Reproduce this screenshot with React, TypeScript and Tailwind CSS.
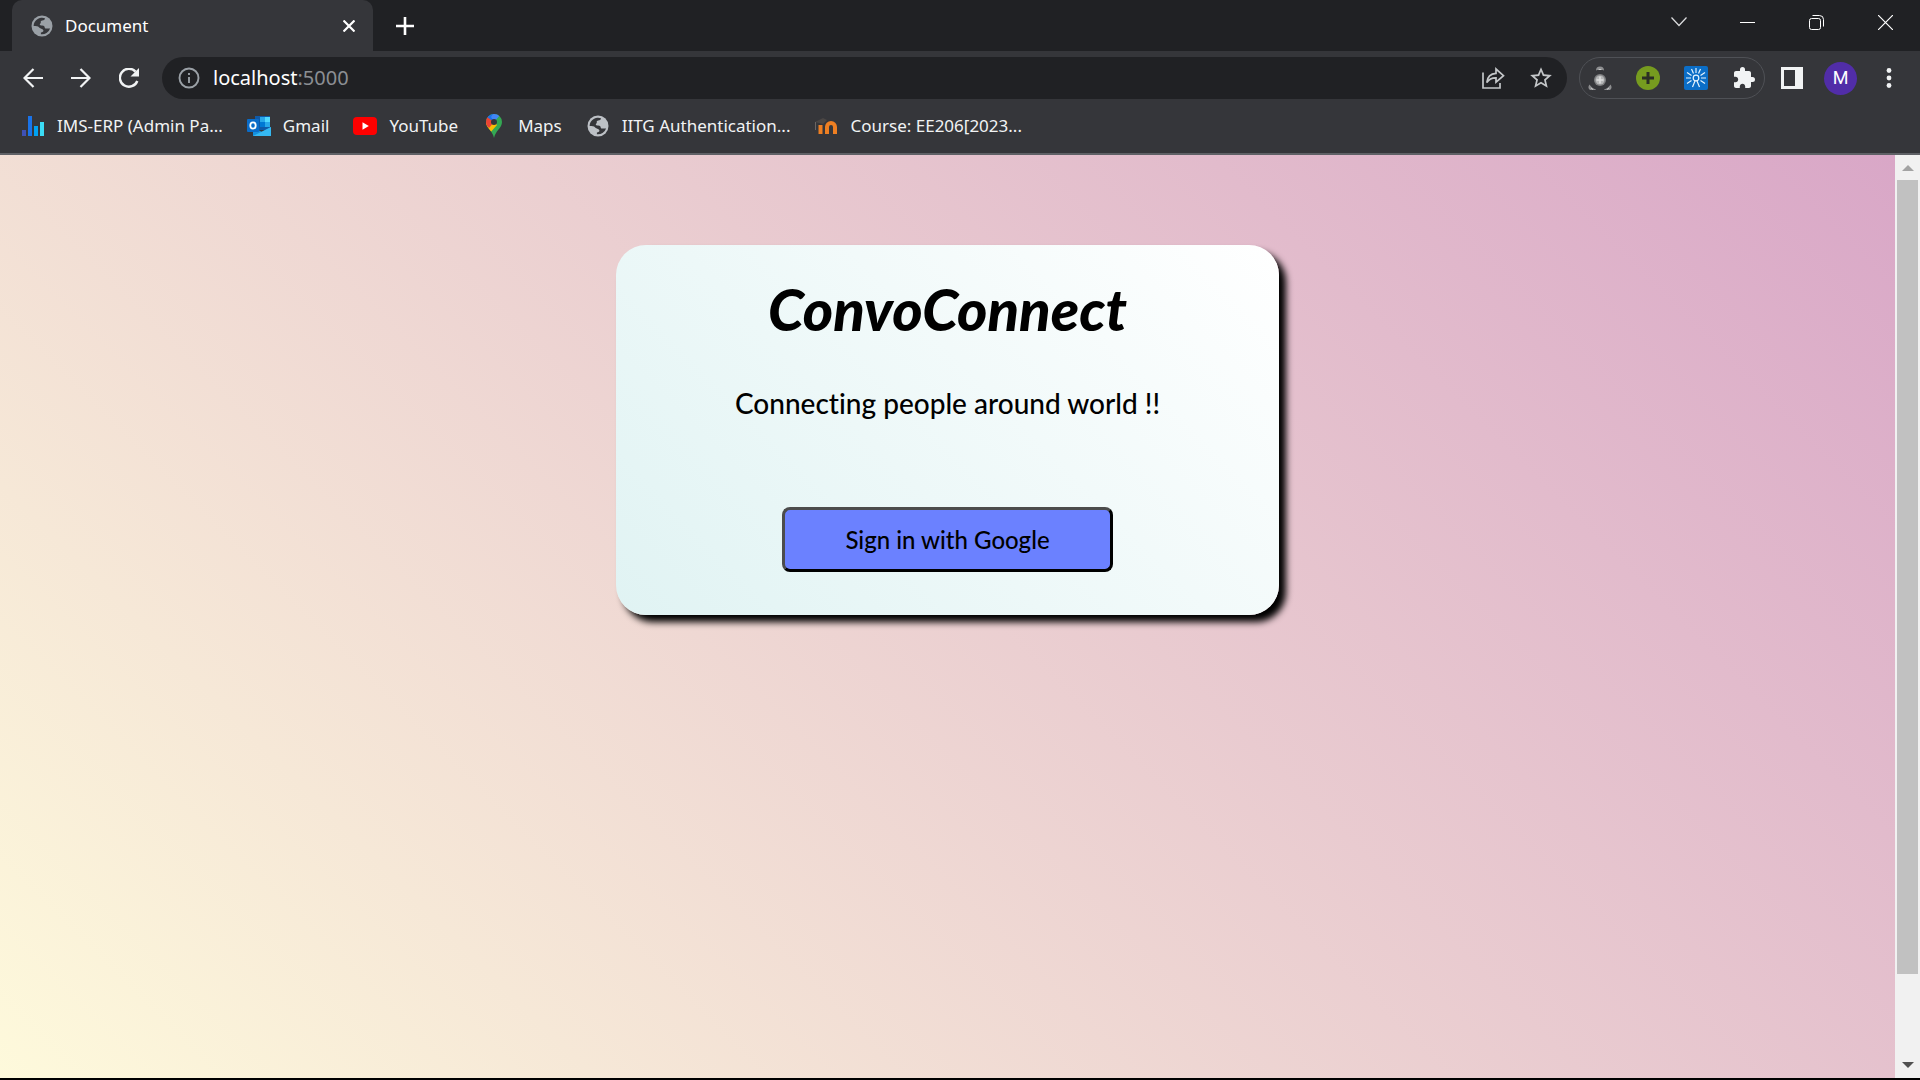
import type { ReactNode } from "react";

function Globe({ color }: { color: string }) {
  return (
    <svg viewBox="0 0 22 22" className="size-[22px] shrink-0" aria-hidden="true">
      <circle cx="11" cy="11" r="10.5" fill={color} />
      <path
        fill="#35363a"
        d="M14 3.200c-.2 1.600-1.200 2.200-2.700 2.300-1.500.1-1.700.8-1.500 2.100.1.900-1 .9-1 1.900 0 .9 1 .9 2.300.9 1.900 0 2.400.9 2.700 2.300.3 1.200 1.900.8 5.300.8a8.500 8.500 0 0 1-9.200 5.700v-1.800c2.600-.4 3.200-1.600 1.900-3-.9-1-3-.8-3.900-2.200-.9-1.200-2.500-1.300-5.300-1.300A8.500 8.500 0 0 1 14 3.200z"
      />
    </svg>
  );
}

function Bars() {
  return (
    <svg viewBox="0 0 22 20" className="h-5 w-[22px] shrink-0" aria-hidden="true">
      <path fill="#3f51b5" d="M0 14h4v6H0z" />
      <path fill="#1a73e8" d="M6 0h4v20H6z" />
      <path fill="#00a1f1" d="M12 10h4v10h-4z" />
      <path fill="#3bdcf5" d="M18 6h4v14h-4z" />
    </svg>
  );
}

function Outlook() {
  return (
    <svg viewBox="0 0 24 22" className="h-[22px] w-6 shrink-0" aria-hidden="true">
      <path fill="#0f5aa8" d="M8 1h15v14H8z" />
      <path fill="#28a8ea" d="M13 2h5v5h-5z" />
      <path fill="#50d9ff" d="M18 2h5v5h-5z" />
      <path fill="#0078d4" d="M13 7h5v5h-5z" />
      <path fill="#28a8ea" d="M18 7h5v5h-5z" />
      <path fill="#1490df" d="M6 12l9 5 9-5v9H6z" />
      <path fill="#35b8f1" d="M6 21l18-9v9z" />
      <rect y="4" width="12" height="13" rx="1" fill="#0a6cc8" />
      <ellipse cx="6" cy="10.5" rx="2.7" ry="3.1" fill="none" stroke="#fff" strokeWidth="1.8" />
    </svg>
  );
}

function YouTube() {
  return (
    <svg viewBox="0 0 24 18" className="h-[18px] w-6 shrink-0" aria-hidden="true">
      <rect width="24" height="18" rx="4" fill="#f00" />
      <path fill="#fff" d="M9.500 5.200v7.600l6.300-3.800z" />
    </svg>
  );
}

function MapPin() {
  return (
    <svg viewBox="0 0 16 24" className="h-6 w-4 shrink-0" aria-hidden="true">
      <clipPath id="pin">
        <path d="M8 0a8 8 0 0 1 8 8c0 3-1.500 5-3.500 7.500S9 20 8 24c-1-4-2.500-6-4.500-8.500S0 11 0 8a8 8 0 0 1 8-8z" />
      </clipPath>
      <g clipPath="url(#pin)">
        <path fill="#34a853" d="M0 0h16v24H0z" />
        <path fill="#fbbc04" d="M0 8h8l3 3-8 9-4-4z" />
        <path fill="#ea4335" d="M0 11V2l2-1 6 7-5 6z" />
        <path fill="#1a73e8" d="M1 3l4-4h4l-1 9z" />
        <path fill="#4285f4" d="M8 8l7-8H7L5 3z" />
      </g>
      <circle cx="8" cy="8" r="3" fill="#35363a" />
    </svg>
  );
}

function Moodle() {
  return (
    <svg viewBox="0 0 24 18" className="h-[18px] w-6 shrink-0" aria-hidden="true">
      <path fill="none" stroke="#ee7f22" strokeWidth="4" d="M6.500 17V8M13 17v-7a3.500 3.500 0 0 1 8 0v7" />
      <path fill="#4a4644" d="M1 5l8-4 4 2-4 4z" />
      <path stroke="#6b6562" d="M1.500 5v8" />
    </svg>
  );
}

const bookmarks: { label: string; icon: ReactNode }[] = [
  { label: "IMS-ERP (Admin Pa...", icon: <Bars /> },
  { label: "Gmail", icon: <Outlook /> },
  { label: "YouTube", icon: <YouTube /> },
  { label: "Maps", icon: <MapPin /> },
  { label: "IITG Authentication...", icon: <Globe color="#bdc1c6" /> },
  { label: "Course: EE206[2023...", icon: <Moodle /> },
];

function IconButton({ label, className, children }: { label: string; className?: string; children: ReactNode }) {
  return (
    <button type="button" aria-label={label} className={className ?? "flex h-10 w-12 shrink-0 items-center justify-center"}>
      {children}
    </button>
  );
}

function TabStrip() {
  return (
    <div className="flex h-[51px] bg-[#202124] pl-3">
      <div className="flex w-[361px] items-center rounded-t-[10px] bg-[#35363a] pr-3 pl-[19px]">
        <Globe color="#9aa0a6" />
        <span className="ml-3 flex-1 text-[17px] text-white">Document</span>
        <IconButton label="Close tab" className="flex size-6 items-center justify-center">
          <svg viewBox="0 0 12 12" className="size-3" stroke="#fff" strokeWidth="2.2" aria-hidden="true">
            <path d="M.5.5l11 11M11.5.5l-11 11" />
          </svg>
        </IconButton>
      </div>
      <IconButton label="New tab" className="ml-5 flex w-6 items-center justify-center">
        <svg viewBox="0 0 18 18" className="size-[18px]" stroke="#fff" strokeWidth="2.6" aria-hidden="true">
          <path d="M9 0v18M0 9h18" />
        </svg>
      </IconButton>
      <div className="ml-auto flex h-11 items-center">
        <IconButton label="Search tabs" className="flex h-full w-[69px] items-center justify-center">
          <svg viewBox="0 0 16 10" className="h-2.5 w-4" fill="none" stroke="#dcdddf" strokeWidth="1.2" aria-hidden="true">
            <path d="M.5.5L8 8.500 15.500.5" />
          </svg>
        </IconButton>
        <IconButton label="Minimize" className="flex h-full w-[69px] items-center justify-center">
          <svg viewBox="0 0 15 1" className="h-px w-[15px]" aria-hidden="true">
            <path fill="#fff" d="M0 0h15v1H0z" />
          </svg>
        </IconButton>
        <IconButton label="Restore" className="flex h-full w-[69px] items-center justify-center">
          <svg viewBox="0 0 15 15" className="size-[15px]" fill="none" stroke="#fff" aria-hidden="true">
            <rect x=".5" y="3.5" width="11" height="11" rx="2" />
            <path d="M3.500.5h7a4 4 0 0 1 4 4v7" />
          </svg>
        </IconButton>
        <IconButton label="Close window" className="flex h-full w-[69px] items-center justify-center">
          <svg viewBox="0 0 15 15" className="size-[15px]" stroke="#fff" strokeWidth="1.2" aria-hidden="true">
            <path d="M0 0l15 15M15 0L0 15" />
          </svg>
        </IconButton>
      </div>
    </div>
  );
}

function Toolbar() {
  return (
    <div className="flex h-[54px] items-center pr-[7px] pl-[9px]">
      <IconButton label="Back">
        <svg viewBox="0 0 20 20" className="size-5" fill="none" stroke="#f1f3f4" strokeWidth="2.2" aria-hidden="true">
          <path d="M20 10H1.500M10.500 1L1.500 10l9 9" />
        </svg>
      </IconButton>
      <IconButton label="Forward">
        <svg viewBox="0 0 20 20" className="size-5" fill="none" stroke="#f1f3f4" strokeWidth="2.2" aria-hidden="true">
          <path d="M0 10h18.500M9.500 1l9 9-9 9" />
        </svg>
      </IconButton>
      <IconButton label="Reload">
        <svg viewBox="0 0 20 20" className="size-5" fill="none" stroke="#f1f3f4" strokeWidth="2.4" aria-hidden="true">
          <path d="M18.300 13A9 9 0 1 1 16.500 3.600" />
          <path fill="#f1f3f4" stroke="none" d="M20 0v8.500h-8.500z" />
        </svg>
      </IconButton>
      <div className="ml-[9px] flex h-[42px] flex-1 items-center rounded-full bg-[#202124] pr-0.5 pl-4">
        <svg viewBox="0 0 22 22" className="size-[22px]" fill="none" stroke="#9aa0a6" strokeWidth="1.9" aria-hidden="true">
          <circle cx="11" cy="11" r="9.5" />
          <path d="M11 10v6M11 6v2" />
        </svg>
        <button type="button" aria-label="Address: localhost:5000" className="ml-[13px] flex-1 cursor-text text-left text-xl text-white">
          localhost<span className="text-[#8b8e93]">:5000</span>
        </button>
        <IconButton label="Share">
          <svg viewBox="0 0 24 24" className="size-6" fill="none" stroke="#c4c7c9" strokeWidth="1.7" aria-hidden="true">
            <path d="M2 6.500V22h17v-5" />
            <path d="M5.800 16.500c.6-5.800 3.600-8.800 9.200-9.100V3l7.500 6.700-7.500 6.500v-4.300c-4-.1-7 1.300-9.200 4.600z" />
          </svg>
        </IconButton>
        <IconButton label="Bookmark this page">
          <svg viewBox="0 0 24 24" className="size-[26px]" aria-hidden="true">
            <path
              fill="#c4c7c9"
              d="M22 9.240l-7.190-.62L12 2 9.190 8.630 2 9.240l5.460 4.730L5.820 21 12 17.270 18.180 21l-1.630-7.030L22 9.240zM12 15.400l-3.760 2.270 1-4.280-3.320-2.880 4.380-.38L12 6.100l1.710 4.040 4.380.38-3.320 2.880 1 4.280L12 15.400z"
            />
          </svg>
        </IconButton>
      </div>
      <div className="ml-3 flex h-[42px] w-[186px] shrink-0 items-center justify-center rounded-full border border-[#4f5156]">
        <IconButton label="Drone extension">
          <svg viewBox="0 0 24 24" className="size-6" aria-hidden="true">
            <circle cx="12" cy="14" r="6" fill="#7e7f81" />
            <circle cx="12" cy="14" r="4.5" fill="#b4b5b6" />
            <path stroke="#dedfe0" strokeWidth="1.5" d="M8.500 14h7M12 10.500v7" />
            <path fill="#8d8e90" d="M8 4.500a4 4 0 0 1 8 0q-4-2-8 0zM1.500 18.500a4 4 0 0 0 6.500 5q-4-1-6.500-5zM22.500 18.500a4 4 0 0 1-6.500 5q4-1 6.500-5z" />
            <path fill="none" stroke="#c9cacb" d="M10.500 3.500h3M3 22l2 1.500M21 22l-2 1.500" />
          </svg>
        </IconButton>
        <IconButton label="Add extension">
          <svg viewBox="0 0 24 24" className="size-6" aria-hidden="true">
            <circle cx="12" cy="12" r="12" fill="#769b1f" />
            <path stroke="#2b2e25" strokeWidth="3" d="M6 12h12M12 6v12" />
          </svg>
        </IconButton>
        <IconButton label="Burst extension">
          <svg viewBox="0 0 24 24" className="size-6" fill="none" stroke="#e6f4fd" strokeWidth="1.2" aria-hidden="true">
            <rect width="24" height="24" rx="2" fill="#0b6ec7" stroke="none" />
            <circle cx="12" cy="12" r="2.8" />
            <path d="M12 7V2M9.500 7.500L7.500 3M14.500 7.500L16.500 3M7.500 9.500L3 6.500M16.500 9.500L21 6.500M7 12H2M17 12h5M7.500 14.500L3 17.500M16.500 14.500l4.500 3M11 15l-2.500 6M13 15l2.500 6" />
          </svg>
        </IconButton>
        <IconButton label="Extensions">
          <svg viewBox="0 0 24 24" className="size-6" fill="#f1f3f4" aria-hidden="true">
            <path d="M20.500 11H19V7c0-1.100-.9-2-2-2h-4V3.500a2.500 2.500 0 0 0-5 0V5H4c-1.100 0-1.990.9-1.990 2v3.800H3.500c1.490 0 2.700 1.210 2.700 2.700s-1.210 2.700-2.700 2.700H2V20c0 1.100.9 2 2 2h3.800v-1.500c0-1.490 1.210-2.700 2.700-2.700s2.700 1.210 2.700 2.700V22H17c1.100 0 2-.9 2-2v-4h1.500a2.500 2.500 0 0 0 0-5z" />
          </svg>
        </IconButton>
      </div>
      <IconButton label="Side panel" className="ml-[3px] flex size-12 items-center justify-center">
        <svg viewBox="0 0 22 22" className="size-[22px]" aria-hidden="true">
          <path fill="#f1f3f4" fillRule="evenodd" d="M0 0h22v22H0zM3 3v16h11V3z" />
        </svg>
      </IconButton>
      <button type="button" aria-label="Profile M" className="ml-2 flex size-[33px] items-center justify-center rounded-full bg-[#512da8] font-[Roboto] text-lg text-white">
        M
      </button>
      <IconButton label="Menu" className="ml-2 flex h-10 w-12 items-center justify-center">
        <svg viewBox="0 0 6 20" className="h-5 w-1.5" fill="#f1f3f4" aria-hidden="true">
          <circle cx="3" cy="2.5" r="2.4" />
          <circle cx="3" cy="10" r="2.4" />
          <circle cx="3" cy="17.5" r="2.4" />
        </svg>
      </IconButton>
    </div>
  );
}

export default function App() {
  return (
    <div className="flex h-screen flex-col overflow-hidden border-b-2 border-black bg-[#35363a] font-['Noto_Sans','Open_Sans',sans-serif]">
      <header className="shrink-0 border-b-2 border-[#5f6166]">
        <TabStrip />
        <Toolbar />
        <nav aria-label="Bookmarks" className="flex h-12 items-start gap-6 pl-[21px]">
          {bookmarks.map((b) => (
            <a key={b.label} href="#" className="flex h-[42px] items-center gap-3 text-[17px] whitespace-nowrap text-[#f1f3f4]">
              <span className="flex w-6 justify-center">{b.icon}</span>
              {b.label}
            </a>
          ))}
        </nav>
      </header>
      <div className="flex min-h-0 flex-1">
        <main className="flex-1 overflow-hidden">
          <div className="flex h-[110%] justify-center bg-[linear-gradient(45deg,#fffcdc,#d9a7c7)]">
            <section className="mt-[90px] flex h-[370px] w-[35%] flex-col items-center rounded-[30px] bg-[linear-gradient(45deg,#e0f3f3,#ffffff)] shadow-[7px_7px_7px_black]">
              <h1 className="mt-6 font-[Lato] text-[58px] leading-20 font-black text-black italic">ConvoConnect</h1>
              <p className="mt-[34px] font-[Lato] text-[28px] leading-10 font-medium text-black [font-variant-ligatures:none]">
                Connecting people around world !!
              </p>
              <button type="button" className="mt-auto mb-[43px] h-[65px] w-1/2 rounded-lg border-3 border-t-[#4c4c4c] border-r-black border-b-black border-l-[#4c4c4c] bg-[#6b81ff] font-[Lato] text-2xl font-medium text-black">
                Sign in with Google
              </button>
            </section>
          </div>
        </main>
        <aside aria-hidden="true" className="flex w-[25px] shrink-0 flex-col items-center bg-[#f1f1f1]">
          <svg viewBox="0 0 12 6" className="mt-2.5 mb-[9px] h-1.5 w-3" fill="#a3a3a3">
            <path d="M6 0l6 6H0z" />
          </svg>
          <div className="h-[86%] w-[21px] bg-[#c1c1c1]" />
          <svg viewBox="0 0 12 6" className="mt-auto mb-2.5 h-1.5 w-3" fill="#505050">
            <path d="M0 0h12L6 6z" />
          </svg>
        </aside>
      </div>
    </div>
  );
}
